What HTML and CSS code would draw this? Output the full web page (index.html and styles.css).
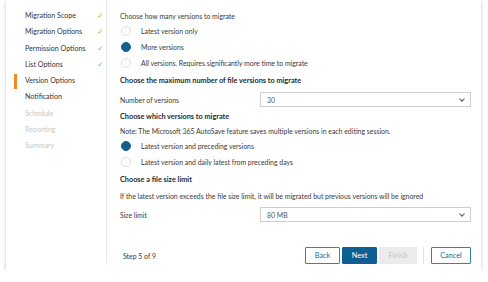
FILE: index.html
```html
<!DOCTYPE html>
<html lang="en">
<head>
<meta charset="UTF-8">
<title>Version Options</title>
<link rel="stylesheet" href="styles.css">
</head>
<body>
  <div class="wizard">
    <div class="steps">
      <div class="step done">Migration Scope<span class="check">&#10003;</span></div>
      <div class="step done">Migration Options<span class="check">&#10003;</span></div>
      <div class="step done">Permission Options<span class="check">&#10003;</span></div>
      <div class="step done">List Options<span class="check">&#10003;</span></div>
      <div class="step active">Version Options</div>
      <div class="step">Notification</div>
      <div class="step disabled">Schedule</div>
      <div class="step disabled">Reporting</div>
      <div class="step disabled">Summary</div>
    </div>

    <div class="main">
      <div class="form">
        <div class="label first">Choose how many versions to migrate</div>
        <div class="radio"><span class="dot"></span>Latest version only</div>
        <div class="radio"><span class="dot on"></span>More versions</div>
        <div class="radio"><span class="dot"></span>All versions. Requires significantly more time to migrate</div>

        <div class="heading">Choose the maximum number of file versions to migrate</div>
        <div class="field">
          <span class="field-label">Number of versions</span>
          <div class="select">30<span class="chev"></span></div>
        </div>

        <div class="heading">Choose which versions to migrate</div>
        <div class="label note">Note: The Microsoft 365 AutoSave feature saves multiple versions in each editing session.</div>
        <div class="radio"><span class="dot on"></span>Latest version and preceding versions</div>
        <div class="radio"><span class="dot"></span>Latest version and daily latest from preceding days</div>

        <div class="heading">Choose a file size limit</div>
        <div class="label">If the latest version exceeds the file size limit, it will be migrated but previous versions will be ignored</div>
        <div class="field">
          <span class="field-label">Size limit</span>
          <div class="select">80 MB<span class="chev"></span></div>
        </div>
      </div>

      <div class="footer">
        <span class="step-count">Step 5 of 9</span>
        <div class="buttons">
          <button class="btn">Back</button>
          <button class="btn primary">Next</button>
          <button class="btn disabled">Finish</button>
          <span class="sep"></span>
          <button class="btn">Cancel</button>
        </div>
      </div>
    </div>
  </div>
</body>
</html>
```

FILE: styles.css
```css
body {
  margin: 0;
  background: #fff;
  font-family: Lato, "Open Sans", Arial, sans-serif;
  font-size: 6.9px;
  color: #3a3a3a;
}

.wizard {
  display: flex;
  width: 475px;
  height: 270px;
  margin-left: 6px;
  background: #fff;
  box-shadow: 0 2px 4px rgba(0, 0, 0, 0.18), 0 0 2px rgba(0, 0, 0, 0.08);
}

.steps {
  width: 101px;
  height: 263px;
  padding-top: 8px;
  box-sizing: border-box;
  border-right: 1px solid #e6e6e6;
}

.step {
  position: relative;
  display: flex;
  justify-content: space-between;
  height: 16.3px;
  line-height: 16.3px;
  padding: 0 3px 0 19px;
  font-size: 7.1px;
  color: #333;
}

.step .check {
  color: #6cbf5c;
  font-family: "DejaVu Sans", sans-serif;
  font-size: 7px;
}

.step.active::before {
  content: "";
  position: absolute;
  left: 8px;
  top: 1px;
  width: 3px;
  height: 15px;
  background: #f08a24;
}

.step.disabled {
  color: #c8c8c8;
}

.main {
  flex: 1;
  display: flex;
  flex-direction: column;
  padding: 9px 10px 0 13px;
}

.form {
  display: flex;
  flex-direction: column;
}

.label {
  line-height: 16px;
  white-space: nowrap;
}

.label.first {
  line-height: 14px;
}

.label.note {
  line-height: 13px;
}

.heading {
  margin-top: 2px;
  line-height: 16px;
  font-size: 7.3px;
  font-weight: 700;
  color: #2a2a2a;
}

.radio {
  display: flex;
  align-items: center;
  height: 16px;
  padding-left: 1px;
}

.dot {
  width: 8px;
  height: 8px;
  margin-right: 10px;
  border: 1px solid #dedede;
  border-radius: 50%;
  background: #fff;
}

.dot.on {
  border-color: #145f8f;
  background: #145f8f;
}

.field {
  display: flex;
  align-items: center;
  justify-content: space-between;
  margin-top: 3px;
}

.select {
  position: relative;
  width: 211px;
  height: 15px;
  line-height: 15px;
  box-sizing: border-box;
  padding-left: 6px;
  border: 1px solid #cfcfcf;
  color: #555;
}

.chev {
  position: absolute;
  right: 6px;
  top: 4px;
  width: 3px;
  height: 3px;
  border-right: 1px solid #555;
  border-bottom: 1px solid #555;
  transform: rotate(45deg);
}

.footer {
  display: flex;
  align-items: center;
  justify-content: space-between;
  margin-top: 25px;
  padding-left: 3px;
}

.buttons {
  display: flex;
  align-items: center;
  gap: 2px;
}

.btn {
  height: 17px;
  padding: 0;
  width: 35px;
  font-family: Lato, "Open Sans", Arial, sans-serif;
  font-size: 7.3px;
  background: #fff;
  color: #24679a;
  border: 1px solid #3d7fae;
  border-radius: 1px;
}

.btn.primary {
  background: #0f5f93;
  border-color: #0f5f93;
  color: #fff;
}

.btn.disabled {
  width: 38px;
  background: #ebebeb;
  border-color: #ebebeb;
  color: #c6c6c6;
}

.sep {
  width: 1px;
  height: 17px;
  margin: 0 5px 0 4px;
  background: #e3e3e3;
}

.btn:last-child {
  width: 40px;
}
```
